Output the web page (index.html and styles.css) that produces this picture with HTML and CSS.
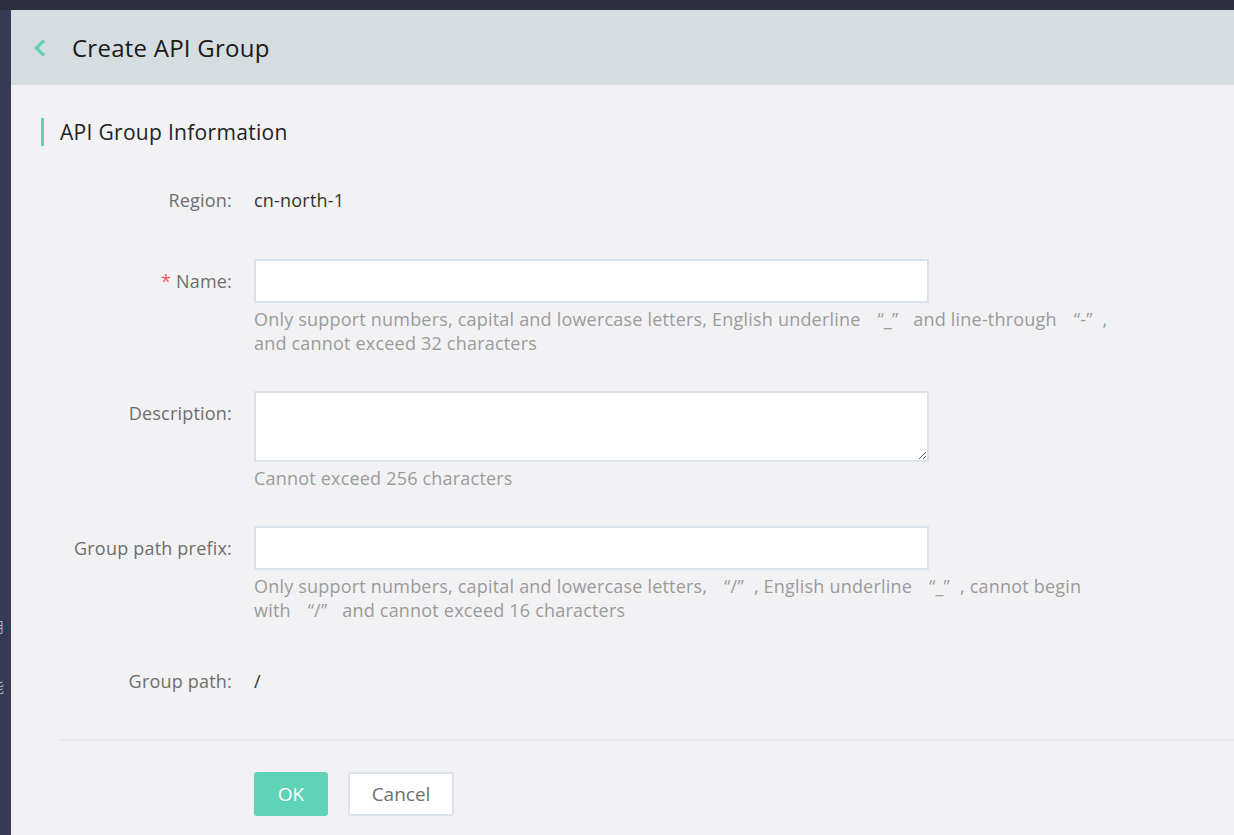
FILE: index.html
```html
<!DOCTYPE html>
<html>
<head>
<meta charset="utf-8">
<link rel="stylesheet" href="styles.css">
</head>
<body>
<div class="topband"></div>
<div class="main">
  <div class="sidestrip">
    <span class="sidechar c1">用</span>
    <span class="sidechar c2">能</span>
  </div>
  <div class="panel">
    <div class="header">
      <svg class="back" width="14" height="18" viewBox="0 0 14 18"><path d="M11 1.5 L3.5 9 L11 16.5" fill="none" stroke="#5fd3b5" stroke-width="3.4" stroke-linecap="butt" stroke-linejoin="miter"/></svg>
      <h1 class="title">Create API Group</h1>
    </div>
    <div class="body">
      <h2 class="section-title">API Group Information</h2>
      <div class="form">
        <div class="row row-gap">
          <div class="label">Region:</div>
          <div class="field"><div class="value">cn-north-1</div></div>
        </div>
        <div class="row">
          <div class="label"><span class="req">*</span> Name:</div>
          <div class="field">
            <input class="input" type="text">
            <div class="hint">Only support numbers, capital and lowercase letters, English underline <span class="ql">“</span>_<span class="qr">”</span> and line-through <span class="ql">“</span>-<span class="qr">”</span>, and cannot exceed 32 characters</div>
          </div>
        </div>
        <div class="row">
          <div class="label">Description:</div>
          <div class="field">
            <textarea class="textarea"></textarea>
            <div class="hint">Cannot exceed 256 characters</div>
          </div>
        </div>
        <div class="row row-gap">
          <div class="label">Group path prefix:</div>
          <div class="field">
            <input class="input" type="text">
            <div class="hint">Only support numbers, capital and lowercase letters, <span class="ql">“</span>/<span class="qr">”</span>, English underline <span class="ql">“</span>_<span class="qr">”</span>, cannot begin with <span class="ql">“</span>/<span class="qr">”</span> and cannot exceed 16 characters</div>
          </div>
        </div>
        <div class="row">
          <div class="label">Group path:</div>
          <div class="field"><div class="value">/</div></div>
        </div>
        <div class="divider"></div>
        <div class="actions">
          <button class="btn btn-ok">OK</button>
          <button class="btn btn-cancel">Cancel</button>
        </div>
      </div>
    </div>
  </div>
</div>
</body>
</html>
```

FILE: styles.css
```css
* { box-sizing: border-box; }
html, body {
  margin: 0;
  padding: 0;
  height: 100%;
  overflow: hidden;
}
body {
  background: #363a52;
  font-family: "Open Sans", "Noto Sans CJK SC", sans-serif;
  display: flex;
  flex-direction: column;
}
.topband {
  height: 10px;
  background: #2d2f3e;
  flex: none;
}
.main {
  flex: 1;
  display: flex;
  min-height: 0;
}
.sidestrip {
  width: 11px;
  flex: none;
  overflow: hidden;
  display: flex;
  flex-direction: column;
  background: #363a52;
}
.sidechar {
  font-family: "Noto Sans CJK SC", sans-serif;
  font-size: 14px;
  color: #aab0c6;
  margin-left: -10px;
  line-height: 16px;
}
.sidechar.c1 { margin-top: 608px; }
.sidechar.c2 { margin-top: 44px; }
.panel {
  flex: 1;
  background: #f2f2f4;
  display: flex;
  flex-direction: column;
}
.header {
  height: 75px;
  background: #d5dde0;
  display: flex;
  align-items: center;
  padding-left: 22px;
  flex: none;
}
.back { margin-right: 25px; margin-top: 1px; }
.title {
  margin: 0;
  font-weight: 400;
  font-size: 24px;
  color: #1a1a1a;
  letter-spacing: 0.25px;
}
.body {
  padding: 33px 0 0 30px;
}
.section-title {
  margin: 0;
  font-weight: 400;
  font-size: 21px;
  letter-spacing: 0.3px;
  color: #222;
  border-left: 3px solid #5fd3b5;
  padding-left: 16px;
  line-height: 28px;
}
.form {
  margin-left: 18px;
  padding-top: 32px;
}
.row {
  display: flex;
  align-items: flex-start;
  margin-bottom: 36px;
}
.row.row-gap { margin-bottom: 37px; }
.label {
  width: 173px;
  margin-right: 22px;
  text-align: right;
  font-size: 18px;
  letter-spacing: 0.2px;
  line-height: 44px;
  color: #6e6e6e;
  flex: none;
}
.req { color: #f2585b; }
.field { flex: none; }
.value {
  font-size: 18px;
  letter-spacing: 0.2px;
  line-height: 44px;
  color: #333;
}
.input {
  display: block;
  width: 675px;
  height: 44px;
  border: 2px solid #dbe3ea;
  background: #fff;
  margin: 0;
  outline: none;
}
.textarea {
  display: block;
  width: 675px;
  height: 71px;
  border: 2px solid #dbe3ea;
  background: #fff;
  margin: 0;
  resize: vertical;
  outline: none;
}
.hint {
  margin-top: 4px;
  width: 866px;
  font-size: 18px;
  letter-spacing: 0.2px;
  line-height: 24px;
  color: #9b9b9b;
}
.ql { margin-left: 12px; }
.qr { margin-right: 10px; }
.divider {
  height: 2px;
  background: #e8e8ea;
  margin-top: 1px;
}
.actions {
  display: flex;
  gap: 20px;
  padding-left: 195px;
  padding-top: 31px;
}
.btn {
  height: 44px;
  font-family: "Open Sans", sans-serif;
  font-size: 19px;
  border-radius: 3px;
  cursor: pointer;
}
.btn-ok {
  width: 74px;
  background: #5fd3b5;
  border: none;
  color: #fff;
}
.btn-cancel {
  width: 106px;
  background: #fff;
  border: 2px solid #dbe3ea;
  color: #707070;
}
```
